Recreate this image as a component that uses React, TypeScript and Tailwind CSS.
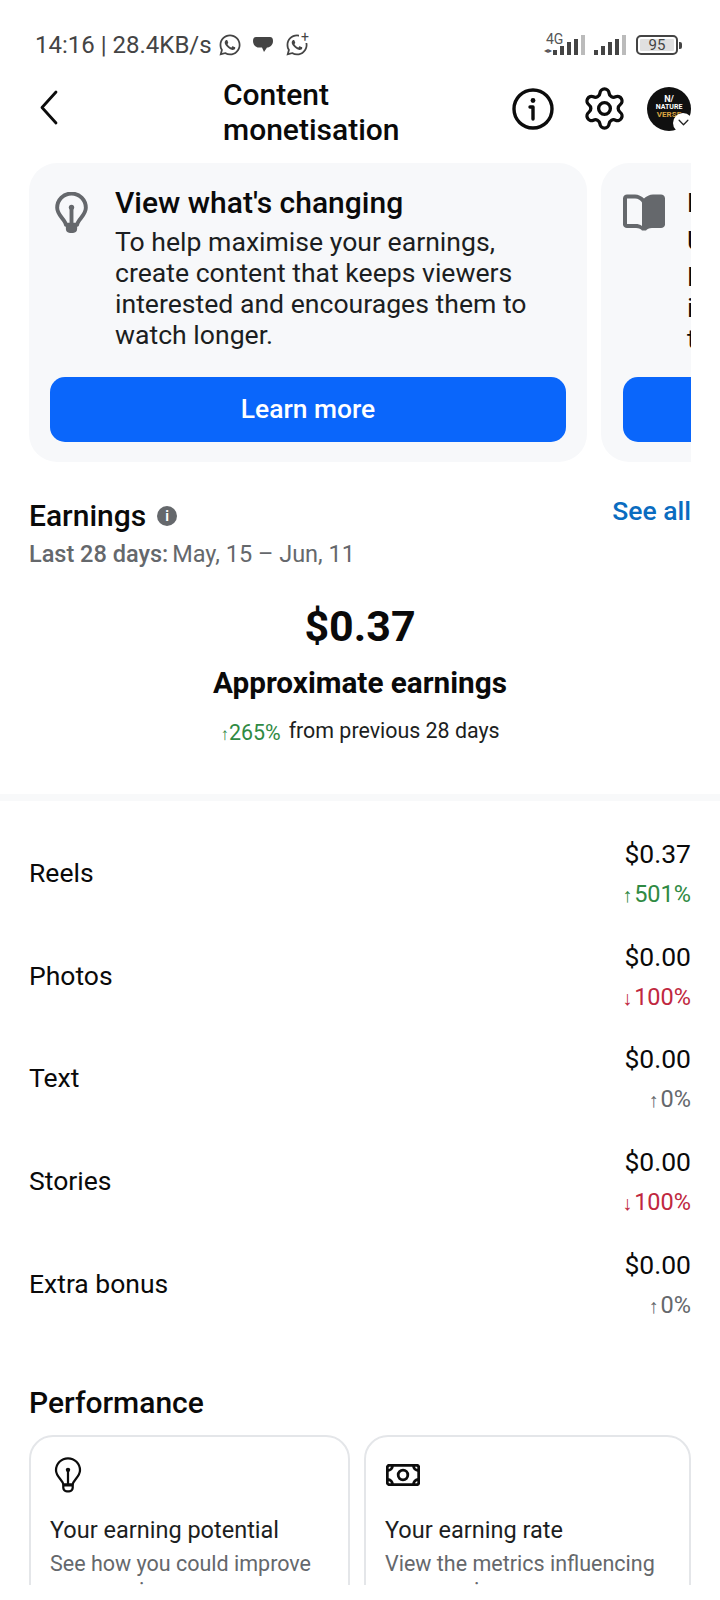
import { Settings } from 'lucide-react';
import { FaWhatsapp } from 'react-icons/fa';

const rows = [
  { label: 'Reels', value: '$0.37', arrow: '↑', pct: '501%', color: 'text-[#2f8a43]' },
  { label: 'Photos', value: '$0.00', arrow: '↓', pct: '100%', color: 'text-[#c0283f]' },
  { label: 'Text', value: '$0.00', arrow: '↑', pct: '0%', color: 'text-[#65686c]' },
  { label: 'Stories', value: '$0.00', arrow: '↓', pct: '100%', color: 'text-[#c0283f]' },
  { label: 'Extra bonus', value: '$0.00', arrow: '↑', pct: '0%', color: 'text-[#65686c]' },
];

function Bulb({ className, fill, weight }: { className: string; fill: string; weight: number }) {
  return (
    <svg viewBox="0 0 32 42" className={className} fill="none" stroke={fill} strokeWidth={weight} strokeLinecap="round">
      <path d="M10.5 32C10 27 2 23 2 15.5a14 14 0 0 1 28 0C30 23 22 27 21.5 32z" strokeLinejoin="round" />
      <path d="M16 31V16" />
      <circle cx="16" cy="15" r="2.6" fill={fill} stroke="none" />
      <path d="M10.5 33h11v3a4 4 0 0 1-4 4h-3a4 4 0 0 1-4-4z" fill={weight > 3 ? fill : 'none'} stroke={weight > 3 ? 'none' : fill} />
    </svg>
  );
}

function SignalBars() {
  return (
    <div className="flex items-end gap-[3px]">
      <div className="w-[4px] h-[5px] bg-[#444]" />
      <div className="w-[4px] h-[9px] bg-[#444]" />
      <div className="w-[4px] h-[13px] bg-[#444]" />
      <div className="w-[4px] h-[16px] bg-[#444]" />
      <div className="w-[4px] h-[20px] bg-[#bbb]" />
    </div>
  );
}

function StatusBar() {
  return (
    <div className="flex items-center justify-between pl-[35px] pr-[38px] pt-[28px] h-[62px] text-[#444]">
      <div className="flex items-center">
        <span className="text-[24px] leading-[28px] w-[183px] whitespace-nowrap">14:16 | 28.4KB/s</span>
        <FaWhatsapp className="w-[24px] h-[24px] text-[#444]" />
        <svg viewBox="0 0 20 18" className="w-[20px] h-[18px] ml-[11px]" fill="#444">
          <path d="M3 1h14c2 0 3 1.500 3 4 0 4-3 6.500-6 6.500l-3 4.500-2-4.500H6C3 11.500 0 9 0 5c0-2.500 1-4 3-4z" />
        </svg>
        <div className="relative ml-[12px]">
          <FaWhatsapp className="w-[24px] h-[24px] text-[#444]" />
          <div className="absolute -top-[2px] -right-[2px] w-[12px] h-[12px] bg-white flex items-center justify-center text-[14px] leading-[12px] text-[#444]">+</div>
        </div>
      </div>
      <div className="flex items-center">
        <div className="relative w-[24px] h-[22px] -mr-[18px] -top-[1px]">
          <span className="absolute -top-[1px] left-[2px] text-[14px] leading-[14px] text-[#555]">4G</span>
          <div className="absolute bottom-0 left-0 text-[8px] leading-[8px] text-[#555]">◂▸</div>
        </div>
        <div className="ml-[3px]"><SignalBars /></div>
        <div className="w-[8px]" />
        <div className="ml-[1px]"><SignalBars /></div>
        <div className="ml-[10px] w-[42px] h-[20px] border-2 border-[#444] rounded-[5px] p-[2px]">
          <div className="h-full bg-[#e0e0e0] rounded-[1px] flex items-center justify-center text-[15px] leading-none text-[#444]">95</div>
        </div>
        <div className="w-[3px] h-[7px] bg-[#444] rounded-r-[2px] ml-[1px]" />
      </div>
    </div>
  );
}

function NavBar() {
  return (
    <div className="flex items-start h-[84px] pt-[15px] pr-[29px]">
      <svg viewBox="0 0 24 36" className="w-[24px] h-[36px] ml-[38px] mt-[13px]" fill="none" stroke="#0c0c0c" strokeWidth="2.8" strokeLinecap="round" strokeLinejoin="round">
        <path d="M18 2 4 17.500 18 33" />
      </svg>
      <h1 className="ml-[161px] w-[190px] text-[30px] leading-[35px] font-medium text-[#0a0a0a]">Content monetisation</h1>
      <div className="flex items-center ml-auto mt-[8px]">
        <svg viewBox="0 0 42 42" className="w-[42px] h-[42px]" fill="none" stroke="#0c0c0c" strokeWidth="3.400" strokeLinecap="round" strokeLinejoin="round">
          <circle cx="21" cy="21" r="19" />
          <path d="M18 19h3v12" />
          <circle cx="21" cy="12.500" r="2.400" fill="#0c0c0c" stroke="none" />
        </svg>
        <Settings className="w-[47px] h-[47px] ml-[27px] text-[#0c0c0c]" strokeWidth={1.7} />
        <div className="relative w-[44px] h-[44px] ml-[19px] rounded-full bg-[#101010] flex flex-col items-center justify-center text-white font-bold overflow-visible">
          <span className="text-[9px] leading-[9px] -mt-[4px]">N/</span>
          <span className="text-[7px] leading-[7px]">NATURE</span>
          <span className="text-[8px] leading-[7px] text-[#d9a441]">VERSE</span>
          <div className="absolute -bottom-[2px] -right-[2px] w-[20px] h-[20px] rounded-full bg-white flex items-center justify-center">
            <svg viewBox="0 0 12 8" className="w-[11px] h-[7px]" fill="none" stroke="#222" strokeWidth="1.500" strokeLinecap="round" strokeLinejoin="round">
              <path d="m1 1.500 5 5 5-5" />
            </svg>
          </div>
        </div>
      </div>
    </div>
  );
}

function PromoCarousel() {
  return (
    <div className="flex gap-[14px] mx-[29px] overflow-hidden">
      <div className="w-[558px] h-[299px] shrink-0 bg-[#f7f8fa] rounded-[28px] pt-[24px] pb-[20px] px-[21px] flex flex-col">
        <div className="flex">
          <div className="w-[65px] pt-[5px] pl-[5px]">
            <Bulb className="w-[33px] h-[43px]" fill="#65686c" weight={3.8} />
          </div>
          <div>
            <h2 className="text-[30px] leading-[31px] font-medium text-[#0a0a0a]">View what's changing</h2>
            <p className="mt-[8px] text-[26.600px] leading-[31px] text-[#1c1e21]">
              To help maximise your earnings,<br />create content that keeps viewers<br />interested and encourages them to<br />watch longer.
            </p>
          </div>
        </div>
        <button className="mt-auto h-[65px] rounded-[15px] bg-[#0a66fb] text-white text-[26.400px] font-medium">Learn more</button>
      </div>
      <div className="w-[300px] h-[299px] shrink-0 bg-[#f7f8fa] rounded-[28px] pt-[24px] pb-[20px] pl-[22px] pr-[21px] flex flex-col">
        <div className="flex">
          <div className="w-[64px] pt-[7px]">
            <svg viewBox="0 0 42 38" className="w-[42px] h-[39px]" fill="#65686c">
              <path fillRule="evenodd" d="M4 0C2 0 0 1.500 0 4v26c0 2 2 3.500 4 3.500h9c3 0 5 1 6 2.500h4c1-1.500 3-2.500 6-2.500h9c2 0 4-1.500 4-3.500V4c0-2.500-2-4-4-4H30c-3 0-7 2-9 4-2-2-6-4-9-4zm0 4h8c3 0 6 2 7 4v23.500c-2-1.500-4-2-6-2H4z" />
            </svg>
          </div>
          <div className="text-[26.600px] leading-[31px] text-[#0a0a0a]">
            <div className="font-medium">Im</div>
            <div className="mt-[7px]">Un</div>
            <div className="mt-[5px]">Le</div>
            <div>in</div>
            <div>to</div>
          </div>
        </div>
        <button className="mt-auto h-[65px] rounded-[15px] bg-[#0a66fb]" />
      </div>
    </div>
  );
}

function EarningsSummary() {
  return (
    <div className="px-[29px]">
      <div className="flex justify-between mt-[37px]">
        <div className="flex items-center">
          <h2 className="text-[30px] leading-[34px] font-medium text-[#0a0a0a]">Earnings</h2>
          <div className="ml-[11px] w-[20px] h-[20px] rounded-full bg-[#65686c] flex items-center justify-center text-white text-[14px] leading-none font-bold">i</div>
        </div>
        <a className="text-[26.500px] leading-[32px] text-[#0a6cc0] font-medium -mt-[4px]">See all</a>
      </div>
      <div className="mt-[4px] text-[23.500px] leading-[34px] text-[#65686c]">
        <span className="font-medium">Last 28 days:</span><span className="ml-[4px]">May, 15 – Jun, 11</span>
      </div>
      <div className="mt-[29px] text-center">
        <div className="text-[43px] leading-[52px] font-bold text-[#0a0a0a]">$0.37</div>
        <div className="mt-[13px] text-[29.700px] leading-[36px] font-bold text-[#0a0a0a]">Approximate earnings</div>
        <div className="mt-[17px] flex items-baseline justify-center text-[21.400px] leading-[30px]">
          <span className="text-[#2f8a43]"><span className="text-[17px]">↑</span>265%</span>
          <span className="ml-[8px] relative -top-[2px] text-[#1c1e21]">from previous 28 days</span>
        </div>
      </div>
    </div>
  );
}

function BreakdownRow({ label, value, arrow, pct, color }: (typeof rows)[number]) {
  return (
    <div className="flex items-center justify-between h-[102.600px]">
      <span className="text-[26.500px] leading-[32px] text-[#0a0a0a]">{label}</span>
      <div className="text-right">
        <div className="text-[26.500px] leading-[34px] text-[#0a0a0a]">{value}</div>
        <div className={`mt-[9px] text-[23.500px] leading-[28px] ${color}`}><span className="text-[20px] mr-[2px]">{arrow}</span>{pct}</div>
      </div>
    </div>
  );
}

function PerformanceCard({ icon, title, text, className }: { icon: React.ReactNode; title: string; text: string; className: string }) {
  return (
    <div className={`h-[200px] shrink-0 border-2 border-[#e4e6e9] rounded-[24px] pt-[20px] px-[19px] ${className}`}>
      <div className="h-[36px] flex items-center">{icon}</div>
      <div className="mt-[21px] text-[23.500px] leading-[32px] text-[#1c1e21] whitespace-nowrap">{title}</div>
      <div className="mt-[4px] text-[21.500px] leading-[27px] text-[#65686c] whitespace-nowrap">{text}<br />your earnings</div>
    </div>
  );
}

export default function App() {
  return (
    <div className="w-[720px] h-[1600px] bg-white overflow-hidden font-[family-name:Roboto,sans-serif]">
      <div className="h-[1585px] overflow-hidden">
        <StatusBar />
        <NavBar />
        <div className="mt-[17px]"><PromoCarousel /></div>
        <EarningsSummary />
        <div className="h-[7px] bg-[#f8f9fa] mt-[45px]" />
        <div className="px-[29px] mt-[21px]">
          {rows.map((row) => (
            <BreakdownRow key={row.label} {...row} />
          ))}
        </div>
        <div className="px-[29px] mt-[50px]">
          <h2 className="text-[30px] leading-[36px] font-medium text-[#0a0a0a]">Performance</h2>
          <div className="flex gap-[14px] mt-[14px]">
            <PerformanceCard
              className="w-[321px]"
              icon={<Bulb className="w-[28px] h-[36px] ml-[4px]" fill="#0c0c0c" weight={2.6} />}
              title="Your earning potential"
              text="See how you could improve"
            />
            <PerformanceCard
              className="w-[327px]"
              icon={
                <svg viewBox="0 0 34 22" className="w-[34px] h-[22px] ml-[1px]" fill="none" stroke="#0c0c0c" strokeWidth="2.800" strokeLinejoin="round">
                  <rect x="1.300" y="1.300" width="31.400" height="19.400" rx="2" />
                  <circle cx="17" cy="11" r="4.800" />
                  <path d="M1.500 6.500c3 0 5-2 5-5M32.500 6.500c-3 0-5-2-5-5M1.500 15.500c3 0 5 2 5 5M32.500 15.500c-3 0-5 2-5 5" />
                </svg>
              }
              title="Your earning rate"
              text="View the metrics influencing"
            />
          </div>
        </div>
      </div>
    </div>
  );
}
